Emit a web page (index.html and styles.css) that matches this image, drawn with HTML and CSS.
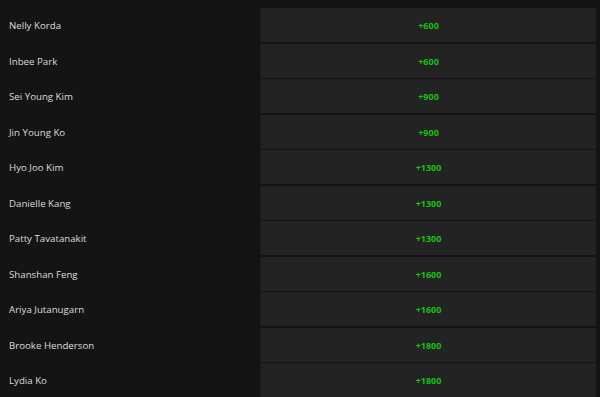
FILE: index.html
```html
<!DOCTYPE html>
<html>
<head>
<meta charset="utf-8">
<link rel="stylesheet" href="styles.css">
</head>
<body>
<div class="board">
  <div class="row"><div class="name">Nelly Korda</div><div class="odds">+600</div></div>
  <div class="row"><div class="name">Inbee Park</div><div class="odds">+600</div></div>
  <div class="row"><div class="name">Sei Young Kim</div><div class="odds">+900</div></div>
  <div class="row"><div class="name">Jin Young Ko</div><div class="odds">+900</div></div>
  <div class="row"><div class="name">Hyo Joo Kim</div><div class="odds">+1300</div></div>
  <div class="row"><div class="name">Danielle Kang</div><div class="odds">+1300</div></div>
  <div class="row"><div class="name">Patty Tavatanakit</div><div class="odds">+1300</div></div>
  <div class="row"><div class="name">Shanshan Feng</div><div class="odds">+1600</div></div>
  <div class="row"><div class="name">Ariya Jutanugarn</div><div class="odds">+1600</div></div>
  <div class="row"><div class="name">Brooke Henderson</div><div class="odds">+1800</div></div>
  <div class="row"><div class="name">Lydia Ko</div><div class="odds">+1800</div></div>
</div>
</body>
</html>
```
FILE: styles.css
```css
html, body {
  margin: 0;
  padding: 0;
  background: #141414;
  overflow: hidden;
}
.board {
  padding: 8px 4px 0 0;
  display: flex;
  flex-direction: column;
  gap: 1.5px;
}
.row {
  display: grid;
  grid-template-columns: 260px 1fr;
  height: 34px;
}
.name {
  display: flex;
  align-items: center;
  padding-left: 9px;
  font-family: "Open Sans", sans-serif;
  font-size: 9.7px;
  color: #dcdcdc;
  padding-top: 1px;
}
.odds {
  background: #232323;
  border-left: 1px solid #1c1c1c;
  display: flex;
  align-items: center;
  justify-content: center;
  font-family: "Open Sans", sans-serif;
  font-weight: 700;
  font-size: 9px;
  color: #18c018;
  padding-top: 1px;
}
```
